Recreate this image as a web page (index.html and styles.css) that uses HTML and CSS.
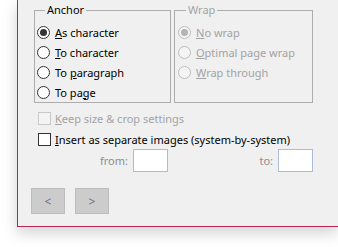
FILE: index.html
```html
<!DOCTYPE html>
<html lang="en">
<head>
    <meta charset="UTF-8">
    <title>Import options</title>
    <link rel="stylesheet" href="styles.css">
</head>
<body>
    <div class="dialog">
        <div class="groups">
            <fieldset class="group">
                <legend>Anchor</legend>
                <label class="option"><span class="radio checked"></span><span><u>A</u>s character</span></label>
                <label class="option"><span class="radio"></span><span><u>T</u>o character</span></label>
                <label class="option"><span class="radio"></span><span>To <u>p</u>aragraph</span></label>
                <label class="option"><span class="radio"></span><span>To pa<u>g</u>e</span></label>
            </fieldset>
            <fieldset class="group wrap disabled">
                <legend>Wrap</legend>
                <label class="option"><span class="radio checked"></span><span><u>N</u>o wrap</span></label>
                <label class="option"><span class="radio"></span><span><u>O</u>ptimal page wrap</span></label>
                <label class="option"><span class="radio"></span><span><u>W</u>rap through</span></label>
            </fieldset>
        </div>
        <label class="check disabled"><span class="box"></span><span><u>K</u>eep size &amp; crop settings</span></label>
        <label class="check"><span class="box"></span><span><u>I</u>nsert as separate images (system-by-system)</span></label>
        <div class="range">
            <label class="field">from: <input type="text"></label>
            <label class="field">to: <input type="text"></label>
        </div>
        <div class="buttons">
            <button class="btn">&lt;</button>
            <button class="btn">&gt;</button>
        </div>
    </div>
</body>
</html>
```
FILE: styles.css
```css
html, body { margin: 0; height: 100%; background: #fff; overflow: hidden; }
body { font-family: 'Noto Sans', 'Open Sans', sans-serif; font-size: 11px; color: #000; }

.dialog {
    margin-left: 17px;
    height: 227px;
    box-sizing: border-box;
    background: #f0f0f0;
    border-left: 1px solid #b52652;
    border-bottom: 1px solid #b52652;
    box-shadow: 0 6px 14px rgba(0, 0, 0, 0.18);
    padding: 2px 0 0 16px;
}

.groups { display: flex; gap: 3px; width: 279px; }
.group {
    margin: 0;
    border: 1px solid #adadad;
    padding: 4px 0 1px 2px;
    width: 137px;
    box-sizing: border-box;
    height: 101px;
}
.group.wrap { width: 139px; padding-left: 3px; }
.group legend { padding: 0 2px; margin-left: 8px; line-height: 16px; }
.disabled, .disabled legend { color: #a3a3a3; }

.option { display: flex; align-items: center; gap: 5px; height: 20px; }
.radio {
    width: 11px; height: 11px;
    border: 1px solid #333;
    border-radius: 50%;
    background: #fff;
    display: flex; align-items: center; justify-content: center;
    flex: none;
}
.radio.checked::after {
    content: '';
    width: 7px; height: 7px;
    border-radius: 50%;
    background: #333;
}
.disabled .radio { border-color: #bdbdbd; background: #f4f4f4; }
.disabled .radio.checked::after { background: #b4b4b4; }

.check { display: flex; align-items: center; gap: 4px; height: 21px; margin-left: 4px; }
.check:first-of-type { margin-top: 5px; }
.box { width: 11px; height: 11px; border: 1px solid #333; background: #fff; flex: none; }
.check.disabled .box { border-color: #c8c8c8; background: #f4f4f4; }

.range { display: flex; justify-content: space-between; width: 279px; padding-left: 66px; box-sizing: border-box; margin-top: -1px; }
.field { display: flex; align-items: center; gap: 5px; color: #8e8e8e; }
.field input {
    width: 35px; height: 23px;
    box-sizing: border-box;
    border: 1px solid #a9bcd8;
    background: #fff;
    margin: 0; padding: 0;
}

.buttons { display: flex; gap: 10px; margin: 16px 0 0 -3px; }
.btn {
    width: 34px; height: 26px;
    background: #cccccc;
    border: 1px solid #bdbdbd;
    color: #6f6f80;
    font-family: inherit;
    font-size: 12px;
    padding: 0;
}
```
